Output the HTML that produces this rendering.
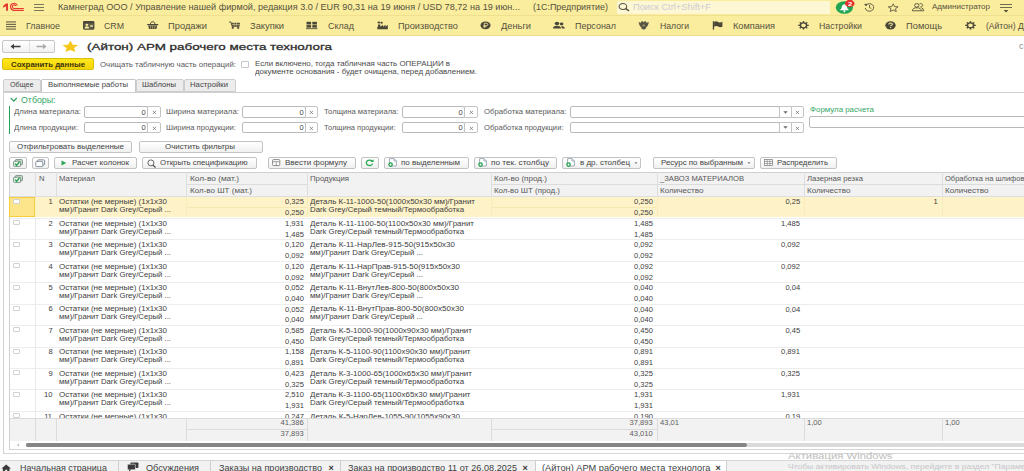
<!DOCTYPE html>
<html lang="ru"><head><meta charset="utf-8"><title>1C</title>
<style>
html,body{margin:0;padding:0}
body{width:1024px;height:471px;overflow:hidden;position:relative;background:#fff;font-family:"Liberation Sans", sans-serif;}
#r{position:absolute;left:0;top:0;width:1024px;height:471px;overflow:hidden}
#r div,#r svg,#r span{position:absolute;box-sizing:border-box}
#r span{white-space:pre;line-height:1}
</style></head><body><div id="r">
<div style="left:0px;top:0px;width:1024px;height:35.5px;background:#fbed9e;"></div>
<div style="left:0px;top:15px;width:1024px;height:1px;background:#efdf8f;"></div>
<div style="left:0px;top:35px;width:1024px;height:1px;background:#eadb92;"></div>
<svg style="left:2px;top:2px" width="24" height="11" viewBox="0 0 24 11"><path d="M1.2 3.8 L4 1.6 H6 V8.8 H4.1 V4.2 L1.2 5.7 Z" fill="#e4382e"/><g fill="none" stroke="#e4382e"><path d="M15.3 3.4 A3.5 3.5 0 1 0 12.2 8.3 H21.8" stroke-width="1.15"/><path d="M13.8 3.9 A1.8 1.8 0 1 0 12.2 6.5 H21.8" stroke-width="1.1"/></g></svg>
<div style="left:34px;top:4.0px;width:10.2px;height:1.1px;background:#7a765a;"></div>
<div style="left:34px;top:6.85px;width:10.2px;height:1.1px;background:#7a765a;"></div>
<div style="left:34px;top:9.7px;width:10.2px;height:1.1px;background:#7a765a;"></div>
<div style="left:617px;top:1px;width:213px;height:12.8px;background:#fdf7d3;border-radius:1px;"></div>
<svg style="left:618px;top:2px" width="13" height="11" viewBox="0 0 13 11"><ellipse cx="4.9" cy="4.5" rx="3.8" ry="3" fill="none" stroke="#55523e" stroke-width="1.05"/><path d="M7.8 6.7 L11 8.9" stroke="#55523e" stroke-width="1.5"/></svg>
<svg style="left:835px;top:0px" width="21" height="15" viewBox="0 0 21 15"><ellipse cx="9.4" cy="7.5" rx="8.6" ry="6.3" fill="#22a653"/><path d="M4.6 10.2 Q6.6 9 7 6.6 Q7.4 4.2 9.4 4.2 Q11.4 4.2 11.8 6.6 Q12.2 9 14.2 10.2 Z" fill="#fff"/><circle cx="9.4" cy="11.3" r="1" fill="#fff"/><ellipse cx="14.8" cy="3.5" rx="4.7" ry="3.6" fill="#e6322e"/></svg>
<svg style="left:863px;top:2.2px" width="13" height="10.6" viewBox="0 0 14 13" preserveAspectRatio="none"><path d="M3.1 4.2 A4.6 4.6 0 1 1 2.4 7.4" fill="none" stroke="#55523e" stroke-width="1.05"/><path d="M1 2.6 L3.4 5.2 L5 2.2 Z" fill="#55523e"/><path d="M7 3.8 V6.8 L9 8" fill="none" stroke="#55523e" stroke-width="1"/></svg>
<svg style="left:886.5px;top:2.6px" width="12.4" height="9.6" viewBox="0 0 14 13" preserveAspectRatio="none"><path d="M7 1.2 L8.6 4.9 L12.5 5.2 L9.5 7.8 L10.5 11.6 L7 9.5 L3.5 11.6 L4.5 7.8 L1.5 5.2 L5.4 4.9 Z" fill="none" stroke="#55523e" stroke-width="1.05" stroke-linejoin="round"/></svg>
<svg style="left:910.5px;top:2.3px" width="14" height="10.4" viewBox="0 0 15 13" preserveAspectRatio="none"><g fill="none" stroke="#55523e" stroke-width="1.05"><circle cx="6.2" cy="4.2" r="2.3"/><path d="M1.5 11 Q1.5 7.2 6.2 7.2 Q10.9 7.2 10.9 11 Z"/><path d="M9.2 2.2 A2.2 2.2 0 1 1 10 6.3 M11.2 7.5 Q13.6 8 13.6 11 H11.2"/></g></svg>
<div style="left:1000px;top:4px;width:11.5px;height:1px;background:#6e6a50;"></div>
<div style="left:1000px;top:7px;width:11.5px;height:1px;background:#6e6a50;"></div>
<svg style="left:1003px;top:9.5px" width="6" height="3" viewBox="0 0 6 3"><path d="M0.6 0 H5.4 L3 2.6 Z" fill="#55523e"/></svg>
<svg style="left:5px;top:21.2px" width="12" height="8.7" viewBox="0 0 12 11" preserveAspectRatio="none"><rect x="1" y="0.60" width="10" height="1.2" fill="#4b483a"/><rect x="1" y="3.60" width="10" height="1.2" fill="#4b483a"/><rect x="1" y="6.60" width="10" height="1.2" fill="#4b483a"/><rect x="1" y="9.60" width="10" height="1.2" fill="#4b483a"/></svg>
<svg style="left:83px;top:21.2px" width="12" height="8.7" viewBox="0 0 12 11" preserveAspectRatio="none"><rect x="0" y="0" width="11.4" height="11" rx="1.4" fill="#4b483a"/><rect x="1" y="3" width="9.4" height="6.8" fill="#615e4b"/><circle cx="3.9" cy="4.9" r="1.4" fill="#fbed9e"/><path d="M1.6 9.4 Q1.6 6.8 3.9 6.8 Q6.2 6.8 6.2 9.4 Z" fill="#fbed9e"/><rect x="7.2" y="5" width="2.6" height="2.6" fill="#cfc68c"/></svg>
<svg style="left:147px;top:21.2px" width="12" height="8.7" viewBox="0 0 12 11" preserveAspectRatio="none"><rect x="0.2" y="3.8" width="11" height="1.5" fill="#4b483a"/><path d="M1.2 5.6 H10.2 L9.4 10.2 H2 Z" fill="#4b483a"/><path d="M3.2 3.8 L4.6 1 H6.8 L8.2 3.8" fill="none" stroke="#4b483a" stroke-width="1"/><path d="M3.6 6.2 V9.8 M5.7 6.2 V9.8 M7.8 6.2 V9.8" stroke="#fbed9e" stroke-width="0.6"/></svg>
<svg style="left:229px;top:21.2px" width="12" height="8.7" viewBox="0 0 12 11" preserveAspectRatio="none"><path d="M0 1.3 H2 L3 6.8 H10.5 M2.4 3 H11" fill="none" stroke="#4b483a" stroke-width="1"/><rect x="3" y="2.4" width="7.6" height="3.8" fill="#4b483a"/><path d="M5.2 2.4 V6.2 M7.6 2.4 V6.2 M3 4.3 H10.6" stroke="#fbed9e" stroke-width="0.6"/><rect x="2.8" y="7.6" width="1.9" height="2.2" fill="#4b483a"/><rect x="8.2" y="7.6" width="1.9" height="2.2" fill="#4b483a"/></svg>
<svg style="left:306px;top:21.2px" width="12" height="8.7" viewBox="0 0 12 11" preserveAspectRatio="none"><rect x="0.5" y="1" width="4.6" height="3.4" fill="#4b483a"/><rect x="6.3" y="1" width="4.6" height="3.4" fill="#4b483a"/><rect x="0.5" y="5.2" width="4.6" height="3.2" fill="#4b483a"/><rect x="6.3" y="5.2" width="4.6" height="3.2" fill="#4b483a"/><rect x="0" y="9.2" width="11.5" height="1.1" fill="#4b483a"/></svg>
<svg style="left:377px;top:21.2px" width="12" height="8.7" viewBox="0 0 12 11" preserveAspectRatio="none"><path d="M0.3 10.6 V7.4 H1 V4.4 H3.3 V7.2 L6 4.6 V7.2 L8.6 4.6 V7.2 L10.8 4.8 V10.6 Z" fill="#4b483a"/><circle cx="1.9" cy="1.9" r="1.4" fill="#4b483a"/><circle cx="4.6" cy="2.2" r="1.2" fill="#4b483a"/></svg>
<svg style="left:480px;top:21.2px" width="12" height="8.7" viewBox="0 0 12 11" preserveAspectRatio="none"><circle cx="5.5" cy="5.5" r="5" fill="#4b483a"/><path d="M4.3 8.6 V2.8 H6.2 A1.6 1.6 0 0 1 6.2 6 H3.4 M3.4 7.3 H6.4" fill="none" stroke="#fbed9e" stroke-width="0.9"/></svg>
<svg style="left:553px;top:21.2px" width="12" height="8.7" viewBox="0 0 12 11" preserveAspectRatio="none"><circle cx="4" cy="3.2" r="2.3" fill="#4b483a"/><path d="M0 9.6 Q0 6 4 6 Q8 6 8 9.6 Z" fill="#4b483a"/><circle cx="8.6" cy="3.8" r="1.8" fill="#4b483a"/><path d="M8.4 6.4 Q11.8 6.4 11.8 9.6 H8.8 Z" fill="#4b483a"/></svg>
<svg style="left:638px;top:21.2px" width="12" height="8.7" viewBox="0 0 12 11" preserveAspectRatio="none"><g fill="#595645"><ellipse cx="5.7" cy="6" rx="2.4" ry="4.6"/><path d="M0.6 1.4 Q2.4 2.4 4 2 L4.6 8 Q1.4 8.4 0.6 1.4 Z"/><path d="M10.8 1.4 Q9 2.4 7.4 2 L6.8 8 Q10 8.4 10.8 1.4 Z"/><circle cx="4.2" cy="1.5" r="1.2"/><circle cx="7.2" cy="1.5" r="1.2"/><path d="M2.4 8.6 L5.7 10.9 L9 8.6 Z"/></g><circle cx="5.7" cy="5.6" r="1.1" fill="#fbed9e" opacity="0.55"/></svg>
<svg style="left:712px;top:21.2px" width="12" height="8.7" viewBox="0 0 12 11" preserveAspectRatio="none"><rect x="0.8" y="0.3" width="1.3" height="10.6" fill="#4b483a"/><path d="M2.1 0.9 Q4.2 -0.2 6.2 1.2 T10.4 0.9 V7.3 Q8.2 8.5 6.2 7.1 T2.1 7.3 Z" fill="#4b483a"/></svg>
<svg style="left:798px;top:21.2px" width="12" height="8.7" viewBox="0 0 12 11" preserveAspectRatio="none"><g transform="translate(5.5 5.5)"><circle r="3.1" fill="none" stroke="#4b483a" stroke-width="1.5"/><rect x="-0.8" y="-5.3" width="1.6" height="2.2" fill="#4b483a" transform="rotate(0)"/><rect x="-0.8" y="-5.3" width="1.6" height="2.2" fill="#4b483a" transform="rotate(45)"/><rect x="-0.8" y="-5.3" width="1.6" height="2.2" fill="#4b483a" transform="rotate(90)"/><rect x="-0.8" y="-5.3" width="1.6" height="2.2" fill="#4b483a" transform="rotate(135)"/><rect x="-0.8" y="-5.3" width="1.6" height="2.2" fill="#4b483a" transform="rotate(180)"/><rect x="-0.8" y="-5.3" width="1.6" height="2.2" fill="#4b483a" transform="rotate(225)"/><rect x="-0.8" y="-5.3" width="1.6" height="2.2" fill="#4b483a" transform="rotate(270)"/><rect x="-0.8" y="-5.3" width="1.6" height="2.2" fill="#4b483a" transform="rotate(315)"/></g></svg>
<svg style="left:885px;top:21.2px" width="12" height="8.7" viewBox="0 0 12 11" preserveAspectRatio="none"><circle cx="5.5" cy="5.5" r="5.2" fill="#4b483a"/><path d="M3.8 4.3 Q3.8 2.6 5.5 2.6 Q7.3 2.6 7.3 4.1 Q7.3 5 6.2 5.6 Q5.6 6 5.6 6.8" fill="none" stroke="#fbed9e" stroke-width="1.1"/><rect x="5" y="7.7" width="1.2" height="1.2" fill="#fbed9e"/></svg>
<svg style="left:965px;top:21.2px" width="12" height="8.7" viewBox="0 0 12 11" preserveAspectRatio="none"><g transform="translate(5.5 5.5)"><circle r="3.1" fill="none" stroke="#4b483a" stroke-width="1.5"/><rect x="-0.8" y="-5.3" width="1.6" height="2.2" fill="#4b483a" transform="rotate(0)"/><rect x="-0.8" y="-5.3" width="1.6" height="2.2" fill="#4b483a" transform="rotate(45)"/><rect x="-0.8" y="-5.3" width="1.6" height="2.2" fill="#4b483a" transform="rotate(90)"/><rect x="-0.8" y="-5.3" width="1.6" height="2.2" fill="#4b483a" transform="rotate(135)"/><rect x="-0.8" y="-5.3" width="1.6" height="2.2" fill="#4b483a" transform="rotate(180)"/><rect x="-0.8" y="-5.3" width="1.6" height="2.2" fill="#4b483a" transform="rotate(225)"/><rect x="-0.8" y="-5.3" width="1.6" height="2.2" fill="#4b483a" transform="rotate(270)"/><rect x="-0.8" y="-5.3" width="1.6" height="2.2" fill="#4b483a" transform="rotate(315)"/></g></svg>
<div style="left:2.3px;top:40px;width:52.4px;height:12.8px;background:linear-gradient(#ffffff,#f1f1f1);border:1px solid #c6c6c6;border-radius:2px;"></div>
<div style="left:28.7px;top:41px;width:1px;height:11px;background:#e0e0e0;"></div>
<svg style="left:10px;top:43px" width="12" height="7" viewBox="0 0 12 7"><path d="M0.5 3.5 L4 0.8 V2.8 H10.5 V4.2 H4 V6.2 Z" fill="#3e3e3e"/></svg>
<svg style="left:36px;top:43px" width="12" height="7" viewBox="0 0 12 7"><path d="M10.5 3.5 L7 0.8 V2.8 H0.5 V4.2 H7 V6.2 Z" fill="#a9a9a9"/></svg>
<svg style="left:61.25px;top:40.1px" width="18.7" height="12.5" viewBox="0 0 18 15" preserveAspectRatio="none"><path d="M9 0.8 L11.3 5.6 L16.6 6.1 L12.6 9.6 L13.8 14.5 L9 11.9 L4.2 14.5 L5.4 9.6 L1.4 6.1 L6.7 5.6 Z" fill="#f7c81c"/></svg>
<div style="left:2.2px;top:58.4px;width:92px;height:11.5px;background:linear-gradient(#ffe81e,#f4d403);border:1px solid #dcc00a;border-radius:2px;"></div>
<div style="left:241px;top:61px;width:8px;height:7.3px;background:#fff;border:1px solid #c6c6c6;border-radius:1px;"></div>
<div style="left:2.5px;top:91.5px;width:1022px;height:1px;background:#cfcfcf;"></div>
<div style="left:2.5px;top:91.5px;width:1px;height:361.5px;background:#d2d2d2;"></div>
<div style="left:2.5px;top:452.5px;width:1022px;height:1px;background:#d6d6d6;"></div>
<div style="left:2.5px;top:79.2px;width:38.5px;height:12.6px;background:#ececec;border:1px solid #cdcdcd;border-radius:2px 2px 0 0;"></div>
<div style="left:136px;top:79.2px;width:48px;height:12.6px;background:#ececec;border:1px solid #cdcdcd;border-radius:2px 2px 0 0;"></div>
<div style="left:184px;top:79.2px;width:51.5px;height:12.6px;background:#ececec;border:1px solid #cdcdcd;border-radius:2px 2px 0 0;"></div>
<div style="left:41px;top:79px;width:95px;height:13px;background:#fff;border:1px solid #c6c6c6;border-radius:2px;border-bottom:none;border-radius:2px 2px 0 0;"></div>
<svg style="left:9.8px;top:97.4px" width="8" height="6" viewBox="0 0 8 6"><path d="M0.8 1 L3.8 4.2 L6.8 1" fill="none" stroke="#2f9e5e" stroke-width="1.2"/></svg>
<div style="left:8.5px;top:106px;width:1.6px;height:27.5px;background:#23a455;"></div>
<div style="left:84px;top:106.2px;width:64px;height:11.5px;background:#fff;border:1px solid #b9b9b9;border-radius:2px;"></div>
<div style="left:147px;top:106.2px;width:13.5px;height:11.5px;background:#fff;border:1px solid #c4c4c4;border-radius:0 2px 2px 0;"></div>
<svg style="left:151.75px;top:109.9px" width="5" height="5" viewBox="0 0 5 5"><path d="M0.8 0.8 L4 4 M4 0.8 L0.8 4" stroke="#777" stroke-width="0.8"/></svg>
<div style="left:242px;top:106.2px;width:63.5px;height:11.5px;background:#fff;border:1px solid #b9b9b9;border-radius:2px;"></div>
<div style="left:304.5px;top:106.2px;width:13.5px;height:11.5px;background:#fff;border:1px solid #c4c4c4;border-radius:0 2px 2px 0;"></div>
<svg style="left:309.25px;top:109.9px" width="5" height="5" viewBox="0 0 5 5"><path d="M0.8 0.8 L4 4 M4 0.8 L0.8 4" stroke="#777" stroke-width="0.8"/></svg>
<div style="left:402px;top:106.2px;width:63px;height:11.5px;background:#fff;border:1px solid #b9b9b9;border-radius:2px;"></div>
<div style="left:464px;top:106.2px;width:13.5px;height:11.5px;background:#fff;border:1px solid #c4c4c4;border-radius:0 2px 2px 0;"></div>
<svg style="left:468.75px;top:109.9px" width="5" height="5" viewBox="0 0 5 5"><path d="M0.8 0.8 L4 4 M4 0.8 L0.8 4" stroke="#777" stroke-width="0.8"/></svg>
<div style="left:570px;top:106.2px;width:209.5px;height:11.5px;background:#fff;border:1px solid #b9b9b9;border-radius:2px;"></div>
<div style="left:778.5px;top:106.2px;width:13px;height:11.5px;background:#fff;border:1px solid #c4c4c4;"></div>
<svg style="left:782.5px;top:110.7px" width="5" height="3" viewBox="0 0 5 3"><path d="M0.4 0.2 H4.6 L2.5 2.8 Z" fill="#666"/></svg>
<div style="left:790.5px;top:106.2px;width:13.5px;height:11.5px;background:#fff;border:1px solid #c4c4c4;border-radius:0 2px 2px 0;"></div>
<svg style="left:795.25px;top:109.9px" width="5" height="5" viewBox="0 0 5 5"><path d="M0.8 0.8 L4 4 M4 0.8 L0.8 4" stroke="#777" stroke-width="0.8"/></svg>
<div style="left:84px;top:121.8px;width:64px;height:11.5px;background:#fff;border:1px solid #b9b9b9;border-radius:2px;"></div>
<div style="left:147px;top:121.8px;width:13.5px;height:11.5px;background:#fff;border:1px solid #c4c4c4;border-radius:0 2px 2px 0;"></div>
<svg style="left:151.75px;top:125.5px" width="5" height="5" viewBox="0 0 5 5"><path d="M0.8 0.8 L4 4 M4 0.8 L0.8 4" stroke="#777" stroke-width="0.8"/></svg>
<div style="left:242px;top:121.8px;width:63.5px;height:11.5px;background:#fff;border:1px solid #b9b9b9;border-radius:2px;"></div>
<div style="left:304.5px;top:121.8px;width:13.5px;height:11.5px;background:#fff;border:1px solid #c4c4c4;border-radius:0 2px 2px 0;"></div>
<svg style="left:309.25px;top:125.5px" width="5" height="5" viewBox="0 0 5 5"><path d="M0.8 0.8 L4 4 M4 0.8 L0.8 4" stroke="#777" stroke-width="0.8"/></svg>
<div style="left:402px;top:121.8px;width:63px;height:11.5px;background:#fff;border:1px solid #b9b9b9;border-radius:2px;"></div>
<div style="left:464px;top:121.8px;width:13.5px;height:11.5px;background:#fff;border:1px solid #c4c4c4;border-radius:0 2px 2px 0;"></div>
<svg style="left:468.75px;top:125.5px" width="5" height="5" viewBox="0 0 5 5"><path d="M0.8 0.8 L4 4 M4 0.8 L0.8 4" stroke="#777" stroke-width="0.8"/></svg>
<div style="left:570px;top:121.8px;width:209.5px;height:11.5px;background:#fff;border:1px solid #b9b9b9;border-radius:2px;"></div>
<div style="left:778.5px;top:121.8px;width:13px;height:11.5px;background:#fff;border:1px solid #c4c4c4;"></div>
<svg style="left:782.5px;top:126.3px" width="5" height="3" viewBox="0 0 5 3"><path d="M0.4 0.2 H4.6 L2.5 2.8 Z" fill="#666"/></svg>
<div style="left:790.5px;top:121.8px;width:13.5px;height:11.5px;background:#fff;border:1px solid #c4c4c4;border-radius:0 2px 2px 0;"></div>
<svg style="left:795.25px;top:125.5px" width="5" height="5" viewBox="0 0 5 5"><path d="M0.8 0.8 L4 4 M4 0.8 L0.8 4" stroke="#777" stroke-width="0.8"/></svg>
<div style="left:809px;top:116px;width:230px;height:11.5px;background:#fff;border:1px solid #b9b9b9;border-radius:2px;"></div>
<div style="left:9px;top:140.5px;width:123px;height:12px;background:linear-gradient(#ffffff,#f0f0f0);border:1px solid #c3c3c3;border-radius:2px;"></div>
<div style="left:139px;top:140.5px;width:123.5px;height:12px;background:linear-gradient(#ffffff,#f0f0f0);border:1px solid #c3c3c3;border-radius:2px;"></div>
<div style="left:9px;top:157px;width:17.5px;height:11.5px;background:linear-gradient(#ffffff,#f0f0f0);border:1px solid #c3c3c3;border-radius:2px;"></div>
<div style="left:31.5px;top:157px;width:17.5px;height:11.5px;background:linear-gradient(#ffffff,#f0f0f0);border:1px solid #c3c3c3;border-radius:2px;"></div>
<svg style="left:12.5px;top:158.5px" width="11" height="9" viewBox="0 0 11 9"><rect x="2.4" y="0.6" width="7" height="5.2" rx="0.8" fill="#d9e6dc" stroke="#5c7f68" stroke-width="0.8"/><rect x="0.6" y="2.2" width="7" height="5.2" rx="0.8" fill="#eef5ef" stroke="#5c7f68" stroke-width="0.8"/><path d="M2 4.6 L3.6 6.2 L6.4 3" fill="none" stroke="#1f9e4c" stroke-width="1.3"/></svg>
<svg style="left:35px;top:158.5px" width="11" height="9" viewBox="0 0 11 9"><rect x="2.6" y="0.8" width="7" height="5.2" rx="0.8" fill="#f4f4f4" stroke="#6b7a8a" stroke-width="0.8"/><rect x="0.8" y="2.4" width="7" height="5.2" rx="0.8" fill="#fff" stroke="#6b7a8a" stroke-width="0.8"/></svg>
<div style="left:54px;top:157px;width:83px;height:11.5px;background:linear-gradient(#ffffff,#f0f0f0);border:1px solid #c3c3c3;border-radius:2px;"></div>
<svg style="left:61px;top:160px" width="6" height="6" viewBox="0 0 6 6"><path d="M0.5 0.4 L5.3 2.9 L0.5 5.4 Z" fill="#2aa84f"/></svg>
<div style="left:142px;top:157px;width:114.5px;height:11.5px;background:linear-gradient(#ffffff,#f0f0f0);border:1px solid #c3c3c3;border-radius:2px;"></div>
<svg style="left:146.5px;top:158.5px" width="10" height="9" viewBox="0 0 10 9"><circle cx="3.9" cy="3.9" r="3" fill="none" stroke="#555" stroke-width="0.9"/><path d="M6 6.2 L8.6 8.4" stroke="#555" stroke-width="1.3"/></svg>
<div style="left:267.5px;top:157px;width:88.0px;height:11.5px;background:linear-gradient(#ffffff,#f0f0f0);border:1px solid #c3c3c3;border-radius:2px;"></div>
<svg style="left:272px;top:159.3px" width="9" height="8" viewBox="0 0 9 8"><rect x="0.6" y="0.6" width="7.2" height="6" rx="0.9" fill="#fdfdfd" stroke="#7d7d7d" stroke-width="0.9"/><path d="M0.6 2.7 H7.8 M4.2 2.7 V6.6" fill="none" stroke="#8a8a8a" stroke-width="0.8"/></svg>
<div style="left:361px;top:157px;width:17.5px;height:11.5px;background:linear-gradient(#ffffff,#f0f0f0);border:1px solid #c3c3c3;border-radius:2px;"></div>
<svg style="left:365px;top:159.3px" width="10" height="8" viewBox="0 0 10 8"><path d="M7.1 2.2 A3.2 2.7 0 1 0 7.6 4.6" fill="none" stroke="#2aa956" stroke-width="1.3"/><path d="M5.4 2.9 L8.7 3.1 L8.5 0.3 Z" fill="#2aa956"/></svg>
<div style="left:383.5px;top:157px;width:85.0px;height:11.5px;background:linear-gradient(#ffffff,#f0f0f0);border:1px solid #c3c3c3;border-radius:2px;"></div>
<svg style="left:388px;top:158.3px" width="10" height="9.5" viewBox="0 0 10 9.5"><path d="M1.6 0.6 H6 L8.4 3 V8 H1.6 Z" fill="#fff" stroke="#8b99a8" stroke-width="0.8"/><path d="M6 0.6 V3 H8.4" fill="none" stroke="#8b99a8" stroke-width="0.7"/><circle cx="2.6" cy="6.6" r="2.3" fill="#22a04c"/><path d="M1.4 6.6 H3.8 M2.6 5.4 V7.8" stroke="#fff" stroke-width="0.8"/></svg>
<div style="left:473.5px;top:157px;width:83.0px;height:11.5px;background:linear-gradient(#ffffff,#f0f0f0);border:1px solid #c3c3c3;border-radius:2px;"></div>
<svg style="left:477.5px;top:158.3px" width="10" height="9.5" viewBox="0 0 10 9.5"><path d="M1.6 0.6 H6 L8.4 3 V8 H1.6 Z" fill="#fff" stroke="#8b99a8" stroke-width="0.8"/><path d="M6 0.6 V3 H8.4" fill="none" stroke="#8b99a8" stroke-width="0.7"/><circle cx="2.6" cy="6.6" r="2.3" fill="#22a04c"/><path d="M1.4 6.6 H3.8 M2.6 5.4 V7.8" stroke="#fff" stroke-width="0.8"/></svg>
<div style="left:562px;top:157px;width:79px;height:11.5px;background:linear-gradient(#ffffff,#f0f0f0);border:1px solid #c3c3c3;border-radius:2px;"></div>
<svg style="left:566px;top:158.3px" width="10" height="9.5" viewBox="0 0 10 9.5"><path d="M1.6 0.6 H6 L8.4 3 V8 H1.6 Z" fill="#fff" stroke="#8b99a8" stroke-width="0.8"/><path d="M6 0.6 V3 H8.4" fill="none" stroke="#8b99a8" stroke-width="0.7"/><circle cx="2.6" cy="6.6" r="2.3" fill="#22a04c"/><path d="M1.4 6.6 H3.8 M2.6 5.4 V7.8" stroke="#fff" stroke-width="0.8"/></svg>
<svg style="left:633.5px;top:162.3px" width="4" height="3" viewBox="0 0 4 3"><path d="M0.5 0.3 H3.5 L2 2.1 Z" fill="#777"/></svg>
<div style="left:652.5px;top:157px;width:102.0px;height:11.5px;background:linear-gradient(#ffffff,#f0f0f0);border:1px solid #c3c3c3;border-radius:2px;"></div>
<svg style="left:746.5px;top:162.3px" width="4" height="3" viewBox="0 0 4 3"><path d="M0.5 0.3 H3.5 L2 2.1 Z" fill="#777"/></svg>
<div style="left:759.5px;top:157px;width:77.5px;height:11.5px;background:linear-gradient(#ffffff,#f0f0f0);border:1px solid #c3c3c3;border-radius:2px;"></div>
<svg style="left:764px;top:159.3px" width="9" height="7" viewBox="0 0 9 7"><rect x="0.5" y="0.5" width="8" height="6" fill="#fff" stroke="#777" stroke-width="0.7"/><path d="M0.5 2.5 H8.5 M0.5 4.5 H8.5 M3.2 0.5 V6.5 M5.9 0.5 V6.5" stroke="#777" stroke-width="0.6"/></svg>
<div style="left:9px;top:171.5px;width:1024px;height:25px;background:#f2f2f2;"></div>
<div style="left:9px;top:171.5px;width:1024px;height:1px;background:#cfcfcf;"></div>
<div style="left:9px;top:196px;width:1024px;height:1px;background:#dedede;"></div>
<div style="left:9px;top:171.5px;width:1px;height:277px;background:#d0d0d0;"></div>
<div style="left:35px;top:172px;width:1px;height:24.5px;background:#dedede;"></div>
<div style="left:55.7px;top:172px;width:1px;height:24.5px;background:#dedede;"></div>
<div style="left:186px;top:172px;width:1px;height:24.5px;background:#dedede;"></div>
<div style="left:307px;top:172px;width:1px;height:24.5px;background:#dedede;"></div>
<div style="left:491px;top:172px;width:1px;height:24.5px;background:#dedede;"></div>
<div style="left:656.5px;top:172px;width:1px;height:24.5px;background:#dedede;"></div>
<div style="left:803.5px;top:172px;width:1px;height:24.5px;background:#dedede;"></div>
<div style="left:941.5px;top:172px;width:1px;height:24.5px;background:#dedede;"></div>
<div style="left:186px;top:184.3px;width:121px;height:1px;background:#dcdcdc;"></div>
<div style="left:491px;top:184.3px;width:540px;height:1px;background:#dcdcdc;"></div>
<svg style="left:12.5px;top:175px" width="11" height="9" viewBox="0 0 11 9"><rect x="2.4" y="0.6" width="7" height="5.2" rx="0.8" fill="#d9e6dc" stroke="#5c7f68" stroke-width="0.8"/><rect x="0.6" y="2.2" width="7" height="5.2" rx="0.8" fill="#eef5ef" stroke="#5c7f68" stroke-width="0.8"/><path d="M2 4.6 L3.6 6.2 L6.4 3" fill="none" stroke="#1f9e4c" stroke-width="1.3"/></svg>
<div style="left:10px;top:197.0px;width:1024px;height:20.23px;background:#fdf2c8;"></div>
<div style="left:9.4px;top:196.7px;width:25.6px;height:20.23px;background:#fde58c;border:1.3px solid #f5cc3c;"></div>
<div style="left:186px;top:206.9px;width:121px;height:1px;background:#f6e8b4;"></div>
<div style="left:491px;top:206.9px;width:166px;height:1px;background:#f6e8b4;"></div>
<div style="left:186px;top:197.0px;width:1px;height:20.23px;background:#f8ecbe;"></div>
<div style="left:307px;top:197.0px;width:1px;height:20.23px;background:#f8ecbe;"></div>
<div style="left:491px;top:197.0px;width:1px;height:20.23px;background:#f8ecbe;"></div>
<div style="left:656.5px;top:197.0px;width:1px;height:20.23px;background:#f8ecbe;"></div>
<div style="left:803.5px;top:197.0px;width:1px;height:20.23px;background:#f8ecbe;"></div>
<div style="left:941.5px;top:197.0px;width:1px;height:20.23px;background:#f8ecbe;"></div>
<div style="left:13.2px;top:198.8px;width:6.5px;height:5.0px;background:#fff;border:1px solid #d2d2d2;border-radius:1px;"></div>
<div style="left:10px;top:217.93px;width:1024px;height:1px;background:#ededed;"></div>
<div style="left:35px;top:217.93px;width:1px;height:200.07px;background:#eaeaea;"></div>
<div style="left:13.2px;top:220.23000000000002px;width:6.5px;height:5.0px;background:#fff;border:1px solid #d2d2d2;border-radius:1px;"></div>
<div style="left:10px;top:239.36px;width:1024px;height:1px;background:#ededed;"></div>
<div style="left:13.2px;top:241.66000000000003px;width:6.5px;height:5.0px;background:#fff;border:1px solid #d2d2d2;border-radius:1px;"></div>
<div style="left:10px;top:260.78999999999996px;width:1024px;height:1px;background:#ededed;"></div>
<div style="left:13.2px;top:263.09px;width:6.5px;height:5.0px;background:#fff;border:1px solid #d2d2d2;border-radius:1px;"></div>
<div style="left:10px;top:282.22px;width:1024px;height:1px;background:#ededed;"></div>
<div style="left:13.2px;top:284.52000000000004px;width:6.5px;height:5.0px;background:#fff;border:1px solid #d2d2d2;border-radius:1px;"></div>
<div style="left:10px;top:303.65px;width:1024px;height:1px;background:#ededed;"></div>
<div style="left:13.2px;top:305.95px;width:6.5px;height:5.0px;background:#fff;border:1px solid #d2d2d2;border-radius:1px;"></div>
<div style="left:10px;top:325.08px;width:1024px;height:1px;background:#ededed;"></div>
<div style="left:13.2px;top:327.38px;width:6.5px;height:5.0px;background:#fff;border:1px solid #d2d2d2;border-radius:1px;"></div>
<div style="left:10px;top:346.51px;width:1024px;height:1px;background:#ededed;"></div>
<div style="left:13.2px;top:348.81px;width:6.5px;height:5.0px;background:#fff;border:1px solid #d2d2d2;border-radius:1px;"></div>
<div style="left:10px;top:367.94px;width:1024px;height:1px;background:#ededed;"></div>
<div style="left:13.2px;top:370.24px;width:6.5px;height:5.0px;background:#fff;border:1px solid #d2d2d2;border-radius:1px;"></div>
<div style="left:10px;top:389.37px;width:1024px;height:1px;background:#ededed;"></div>
<div style="left:13.2px;top:391.67px;width:6.5px;height:5.0px;background:#fff;border:1px solid #d2d2d2;border-radius:1px;"></div>
<div style="left:10px;top:410.8px;width:1024px;height:1px;background:#ededed;"></div>
<div style="left:13.2px;top:413.1px;width:6.5px;height:5.0px;background:#fff;border:1px solid #d2d2d2;border-radius:1px;"></div>
<div style="left:10px;top:417.5px;width:1024px;height:23px;z-index:3;background:#f2f2f2;"></div>
<div style="left:10px;top:417.5px;width:1024px;height:1px;z-index:3;background:#dadada;"></div>
<div style="left:35px;top:418px;width:1px;height:22.5px;z-index:3;background:#dcdcdc;"></div>
<div style="left:55.7px;top:418px;width:1px;height:22.5px;z-index:3;background:#dcdcdc;"></div>
<div style="left:186px;top:418px;width:1px;height:22.5px;z-index:3;background:#dcdcdc;"></div>
<div style="left:307px;top:418px;width:1px;height:22.5px;z-index:3;background:#dcdcdc;"></div>
<div style="left:491px;top:418px;width:1px;height:22.5px;z-index:3;background:#dcdcdc;"></div>
<div style="left:656.5px;top:418px;width:1px;height:22.5px;z-index:3;background:#dcdcdc;"></div>
<div style="left:803.5px;top:418px;width:1px;height:22.5px;z-index:3;background:#dcdcdc;"></div>
<div style="left:941.5px;top:418px;width:1px;height:22.5px;z-index:3;background:#dcdcdc;"></div>
<div style="left:186px;top:429px;width:121px;height:1px;z-index:3;background:#dcdcdc;"></div>
<div style="left:491px;top:429px;width:166px;height:1px;z-index:3;background:#dcdcdc;"></div>
<div style="left:10px;top:440.5px;width:1024px;height:8px;z-index:3;background:#fff;"></div>
<div style="left:26px;top:442.5px;width:998px;height:4.2px;z-index:3;background:#dadada;"></div>
<div style="left:26px;top:442.5px;width:721px;height:4.2px;z-index:3;background:#858585;border-radius:2.1px;"></div>
<svg style="left:16px;top:443px;z-index:3" width="4" height="4" viewBox="0 0 4 4"><path d="M3 0.4 L0.8 2 L3 3.6 Z" fill="#bdbdbd"/></svg>
<div style="left:9px;top:448.5px;width:1024px;height:1px;z-index:3;background:#d4d4d4;"></div>
<div style="left:0px;top:459.5px;width:1024px;height:12px;background:#f2f2f2;"></div>
<div style="left:0px;top:459.5px;width:1024px;height:1px;background:#d6d6d6;"></div>
<svg style="left:1.3px;top:463.6px" width="10.4" height="9" viewBox="0 0 9 9" preserveAspectRatio="none"><path d="M4.5 0.6 L8.6 4.4 H7.4 V8.4 H5.4 V5.8 H3.6 V8.4 H1.6 V4.4 H0.4 Z" fill="#3a3a3a"/></svg>
<div style="left:118px;top:459.5px;width:1px;height:12px;background:#cfcfcf;"></div>
<svg style="left:127px;top:462.3px" width="12" height="10" viewBox="0 0 12 10"><rect x="3.4" y="0.4" width="8" height="5.6" rx="0.8" fill="#3a3a3a"/><rect x="0.4" y="2.2" width="8" height="5.6" rx="0.8" fill="#3a3a3a" stroke="#f1f1f1" stroke-width="0.6"/><path d="M2 7.6 V9.6 L4.4 7.6 Z" fill="#3a3a3a"/></svg>
<div style="left:210px;top:459.5px;width:1px;height:12px;background:#cfcfcf;"></div>
<div style="left:339.5px;top:459.5px;width:1px;height:12px;background:#cfcfcf;"></div>
<div style="left:534.5px;top:459.5px;width:192.5px;height:12px;background:#fff;border:1px solid #cfcfcf;"></div>
<span style="top:3.76px;font-size:8.2px;color:#55523e;left:58.00px;transform-origin:0 50%;transform:scaleX(1.1165);">Камнеград ООО / Управление нашей фирмой, редакция 3.0 / EUR 90,31 на 19 июня / USD 78,72 на 19 июн...</span>
<span style="top:3.76px;font-size:8.2px;color:#55523e;left:533.00px;transform-origin:0 50%;transform:scaleX(1.0924);">(1С:Предприятие)</span>
<span style="top:3.76px;font-size:8.2px;color:#cfcbd3;left:633.00px;transform-origin:0 50%;transform:scaleX(1.1361);">Поиск Ctrl+Shift+F</span>
<span style="top:0.75px;font-size:6.2px;color:#fff;font-weight:bold;left:847.80px;transform-origin:0 50%;transform:scaleX(1.2163);">2</span>
<span style="top:4.44px;font-size:6.8px;color:#55523e;left:932.00px;transform-origin:0 50%;transform:scaleX(1.1825);">Администратор</span>
<span style="top:21.84px;font-size:8.7px;color:#55523e;left:26.00px;transform-origin:0 50%;transform:scaleX(1.0240);">Главное</span>
<span style="top:21.84px;font-size:8.7px;color:#55523e;left:104.00px;transform-origin:0 50%;transform:scaleX(1.0103);">CRM</span>
<span style="top:21.84px;font-size:8.7px;color:#55523e;left:168.00px;transform-origin:0 50%;transform:scaleX(1.0749);">Продажи</span>
<span style="top:21.84px;font-size:8.7px;color:#55523e;left:250.00px;transform-origin:0 50%;transform:scaleX(1.0730);">Закупки</span>
<span style="top:21.84px;font-size:8.7px;color:#55523e;left:328.00px;transform-origin:0 50%;transform:scaleX(1.0335);">Склад</span>
<span style="top:21.84px;font-size:8.7px;color:#55523e;left:398.00px;transform-origin:0 50%;transform:scaleX(1.0590);">Производство</span>
<span style="top:21.84px;font-size:8.7px;color:#55523e;left:501.00px;transform-origin:0 50%;transform:scaleX(1.0690);">Деньги</span>
<span style="top:21.84px;font-size:8.7px;color:#55523e;left:575.00px;transform-origin:0 50%;transform:scaleX(1.0278);">Персонал</span>
<span style="top:21.84px;font-size:8.7px;color:#55523e;left:660.00px;transform-origin:0 50%;transform:scaleX(0.9952);">Налоги</span>
<span style="top:21.84px;font-size:8.7px;color:#55523e;left:733.00px;transform-origin:0 50%;transform:scaleX(1.0562);">Компания</span>
<span style="top:21.84px;font-size:8.7px;color:#55523e;left:819.00px;transform-origin:0 50%;transform:scaleX(1.0092);">Настройки</span>
<span style="top:21.84px;font-size:8.7px;color:#55523e;left:906.00px;transform-origin:0 50%;transform:scaleX(1.0726);">Помощь</span>
<span style="top:21.84px;font-size:8.7px;color:#55523e;left:986.00px;transform-origin:0 50%;transform:scaleX(0.9854);">(Айтон) Доработки</span>
<span style="top:41.82px;font-size:9.9px;color:#2b2b2b;left:87.00px;transform-origin:0 50%;transform:scaleX(1.3577);-webkit-text-stroke:0.3px #2b2b2b;">(Айтон) АРМ рабочего места технолога</span>
<span style="top:42.38px;font-size:9px;color:#8a8a8a;left:1019.00px;transform-origin:0 50%;">с</span>
<span style="top:61.87px;font-size:7.12px;color:#3c3410;font-weight:bold;left:11.00px;transform-origin:0 50%;transform:scaleX(1.1024);">Сохранить данные</span>
<span style="top:61.98px;font-size:6.76px;color:#5a5a5a;left:100.00px;transform-origin:0 50%;transform:scaleX(1.1636);">Очищать табличную часть операций:</span>
<span style="top:60.92px;font-size:6.59px;color:#4a4a4a;left:255.00px;transform-origin:0 50%;transform:scaleX(1.1991);">Если включено, тогда табличная часть ОПЕРАЦИИ в</span>
<span style="top:69.02px;font-size:6.59px;color:#4a4a4a;left:255.00px;transform-origin:0 50%;transform:scaleX(1.2046);">документе основания - будет очищена, перед добавлением.</span>
<span style="top:82.13px;font-size:6.94px;color:#444;left:10.00px;transform-origin:0 50%;transform:scaleX(1.0344);">Общее</span>
<span style="top:82.13px;font-size:6.94px;color:#444;left:142.00px;transform-origin:0 50%;transform:scaleX(1.1079);">Шаблоны</span>
<span style="top:82.13px;font-size:6.94px;color:#444;left:190.00px;transform-origin:0 50%;transform:scaleX(1.1166);">Настройки</span>
<span style="top:82.13px;font-size:6.94px;color:#444;left:48.00px;transform-origin:0 50%;transform:scaleX(1.1162);">Выполняемые работы</span>
<span style="top:96.57px;font-size:8.19px;color:#33a765;left:21.00px;transform-origin:0 50%;transform:scaleX(1.0776);">Отборы:</span>
<span style="top:109.30px;font-size:6.85px;color:#5a5a5a;left:14.00px;transform-origin:0 50%;transform:scaleX(1.1490);">Длина материала:</span>
<span style="top:109.88px;font-size:6.76px;color:#444;right:878.20px;transform-origin:100% 50%;transform:scaleX(1.1236);">0</span>
<span style="top:109.30px;font-size:6.85px;color:#5a5a5a;left:166.00px;transform-origin:0 50%;transform:scaleX(1.1482);">Ширина материала:</span>
<span style="top:109.88px;font-size:6.76px;color:#444;right:720.70px;transform-origin:100% 50%;transform:scaleX(1.1236);">0</span>
<span style="top:109.30px;font-size:6.85px;color:#5a5a5a;left:324.00px;transform-origin:0 50%;transform:scaleX(1.1185);">Толщина материала:</span>
<span style="top:109.88px;font-size:6.76px;color:#444;right:561.20px;transform-origin:100% 50%;transform:scaleX(1.1236);">0</span>
<span style="top:109.30px;font-size:6.85px;color:#5a5a5a;left:484.00px;transform-origin:0 50%;transform:scaleX(1.1335);">Обработка материала:</span>
<span style="top:124.90px;font-size:6.85px;color:#5a5a5a;left:14.00px;transform-origin:0 50%;transform:scaleX(1.1231);">Длина продукции:</span>
<span style="top:125.48px;font-size:6.76px;color:#444;right:878.20px;transform-origin:100% 50%;transform:scaleX(1.1236);">0</span>
<span style="top:124.90px;font-size:6.85px;color:#5a5a5a;left:166.00px;transform-origin:0 50%;transform:scaleX(1.1242);">Ширина продукции:</span>
<span style="top:125.48px;font-size:6.76px;color:#444;right:720.70px;transform-origin:100% 50%;transform:scaleX(1.1236);">0</span>
<span style="top:124.90px;font-size:6.85px;color:#5a5a5a;left:324.00px;transform-origin:0 50%;transform:scaleX(1.0953);">Толщина продукции:</span>
<span style="top:125.48px;font-size:6.76px;color:#444;right:561.20px;transform-origin:100% 50%;transform:scaleX(1.1236);">0</span>
<span style="top:124.90px;font-size:6.85px;color:#5a5a5a;left:484.00px;transform-origin:0 50%;transform:scaleX(1.1124);">Обработка продукции:</span>
<span style="top:106.56px;font-size:6.9px;color:#33a765;left:810.00px;transform-origin:0 50%;transform:scaleX(1.1445);">Формула расчета</span>
<span style="top:144.03px;font-size:6.94px;color:#444;left:17.00px;transform-origin:0 50%;transform:scaleX(1.1509);">Отфильтровать выделенные</span>
<span style="top:144.03px;font-size:6.94px;color:#444;left:165.00px;transform-origin:0 50%;transform:scaleX(1.1502);">Очистить фильтры</span>
<span style="top:160.12px;font-size:6.59px;color:#444;left:72.00px;transform-origin:0 50%;transform:scaleX(1.2136);">Расчет колонок</span>
<span style="top:160.12px;font-size:6.59px;color:#444;left:160.00px;transform-origin:0 50%;transform:scaleX(1.1862);">Открыть спецификацию</span>
<span style="top:160.12px;font-size:6.59px;color:#444;left:285.00px;transform-origin:0 50%;transform:scaleX(1.2187);">Ввести формулу</span>
<span style="top:160.12px;font-size:6.59px;color:#444;left:401.00px;transform-origin:0 50%;transform:scaleX(1.2149);">по выделенным</span>
<span style="top:160.12px;font-size:6.59px;color:#444;left:491.00px;transform-origin:0 50%;transform:scaleX(1.2448);">по тек. столбцу</span>
<span style="top:160.12px;font-size:6.59px;color:#444;left:580.00px;transform-origin:0 50%;transform:scaleX(1.2140);">в др. столбец</span>
<span style="top:160.12px;font-size:6.59px;color:#444;left:661.00px;transform-origin:0 50%;transform:scaleX(1.2073);">Ресурс по выбранным</span>
<span style="top:160.12px;font-size:6.59px;color:#444;left:777.00px;transform-origin:0 50%;transform:scaleX(1.1835);">Распределить</span>
<span style="top:175.98px;font-size:6.76px;color:#585858;left:39.00px;transform-origin:0 50%;transform:scaleX(1.1236);">N</span>
<span style="top:175.98px;font-size:6.76px;color:#585858;left:59.00px;transform-origin:0 50%;transform:scaleX(1.1503);">Материал</span>
<span style="top:175.98px;font-size:6.76px;color:#585858;left:190.00px;transform-origin:0 50%;transform:scaleX(1.2303);">Кол-во (мат.)</span>
<span style="top:187.78px;font-size:6.76px;color:#585858;left:190.00px;transform-origin:0 50%;transform:scaleX(1.1919);">Кол-во ШТ (мат.)</span>
<span style="top:175.98px;font-size:6.76px;color:#585858;left:310.00px;transform-origin:0 50%;transform:scaleX(1.1545);">Продукция</span>
<span style="top:175.98px;font-size:6.76px;color:#585858;left:494.00px;transform-origin:0 50%;transform:scaleX(1.1990);">Кол-во (прод.)</span>
<span style="top:187.78px;font-size:6.76px;color:#585858;left:494.00px;transform-origin:0 50%;transform:scaleX(1.1707);">Кол-во ШТ (прод.)</span>
<span style="top:175.98px;font-size:6.76px;color:#585858;left:660.00px;transform-origin:0 50%;transform:scaleX(1.1316);">_ЗАВОЗ МАТЕРИАЛОВ</span>
<span style="top:187.78px;font-size:6.76px;color:#585858;left:660.00px;transform-origin:0 50%;transform:scaleX(1.2000);">Количество</span>
<span style="top:175.98px;font-size:6.76px;color:#585858;left:807.00px;transform-origin:0 50%;transform:scaleX(1.1436);">Лазерная резка</span>
<span style="top:187.78px;font-size:6.76px;color:#585858;left:807.00px;transform-origin:0 50%;transform:scaleX(1.2000);">Количество</span>
<span style="top:175.98px;font-size:6.76px;color:#585858;left:945.00px;transform-origin:0 50%;transform:scaleX(1.1151);">Обработка на шлифов</span>
<span style="top:187.78px;font-size:6.76px;color:#585858;left:945.00px;transform-origin:0 50%;transform:scaleX(1.2000);">Количество</span>
<span style="top:199.28px;font-size:6.76px;color:#404040;right:971.50px;transform-origin:100% 50%;transform:scaleX(1.1236);">1</span>
<span style="top:199.28px;font-size:6.76px;color:#404040;left:59.00px;transform-origin:0 50%;transform:scaleX(1.1846);">Остатки (не мерные) (1x1x30</span>
<span style="top:207.28px;font-size:6.76px;color:#404040;left:59.00px;transform-origin:0 50%;transform:scaleX(1.1452);">мм)/Гранит Dark Grey/Серый ...</span>
<span style="top:199.48px;font-size:6.76px;color:#404040;right:720.50px;transform-origin:100% 50%;transform:scaleX(1.1236);">0,325</span>
<span style="top:210.28px;font-size:6.76px;color:#404040;right:720.50px;transform-origin:100% 50%;transform:scaleX(1.1236);">0,250</span>
<span style="top:199.28px;font-size:6.76px;color:#404040;left:310.00px;transform-origin:0 50%;transform:scaleX(1.1778);">Деталь К-11-1000-50(1000x50x30 мм)/Гранит</span>
<span style="top:207.28px;font-size:6.76px;color:#404040;left:310.00px;transform-origin:0 50%;transform:scaleX(1.1549);">Dark Grey/Серый темный/Термообработка</span>
<span style="top:199.48px;font-size:6.76px;color:#404040;right:371.00px;transform-origin:100% 50%;transform:scaleX(1.1236);">0,250</span>
<span style="top:210.28px;font-size:6.76px;color:#404040;right:371.00px;transform-origin:100% 50%;transform:scaleX(1.1236);">0,250</span>
<span style="top:199.48px;font-size:6.76px;color:#404040;right:224.00px;transform-origin:100% 50%;transform:scaleX(1.1236);">0,25</span>
<span style="top:199.48px;font-size:6.76px;color:#404040;right:86.00px;transform-origin:100% 50%;transform:scaleX(1.1236);">1</span>
<span style="top:220.71px;font-size:6.76px;color:#404040;right:971.50px;transform-origin:100% 50%;transform:scaleX(1.1236);">2</span>
<span style="top:220.71px;font-size:6.76px;color:#404040;left:59.00px;transform-origin:0 50%;transform:scaleX(1.1846);">Остатки (не мерные) (1x1x30</span>
<span style="top:228.71px;font-size:6.76px;color:#404040;left:59.00px;transform-origin:0 50%;transform:scaleX(1.1452);">мм)/Гранит Dark Grey/Серый ...</span>
<span style="top:220.91px;font-size:6.76px;color:#404040;right:720.50px;transform-origin:100% 50%;transform:scaleX(1.1236);">1,931</span>
<span style="top:231.71px;font-size:6.76px;color:#404040;right:720.50px;transform-origin:100% 50%;transform:scaleX(1.1236);">1,485</span>
<span style="top:220.71px;font-size:6.76px;color:#404040;left:310.00px;transform-origin:0 50%;transform:scaleX(1.1791);">Деталь К-11-1100-50(1100x50x30 мм)/Гранит</span>
<span style="top:228.71px;font-size:6.76px;color:#404040;left:310.00px;transform-origin:0 50%;transform:scaleX(1.1549);">Dark Grey/Серый темный/Термообработка</span>
<span style="top:220.91px;font-size:6.76px;color:#404040;right:371.00px;transform-origin:100% 50%;transform:scaleX(1.1236);">1,485</span>
<span style="top:231.71px;font-size:6.76px;color:#404040;right:371.00px;transform-origin:100% 50%;transform:scaleX(1.1236);">1,485</span>
<span style="top:220.91px;font-size:6.76px;color:#404040;right:224.00px;transform-origin:100% 50%;transform:scaleX(1.1236);">1,485</span>
<span style="top:242.14px;font-size:6.76px;color:#404040;right:971.50px;transform-origin:100% 50%;transform:scaleX(1.1236);">3</span>
<span style="top:242.14px;font-size:6.76px;color:#404040;left:59.00px;transform-origin:0 50%;transform:scaleX(1.1846);">Остатки (не мерные) (1x1x30</span>
<span style="top:250.14px;font-size:6.76px;color:#404040;left:59.00px;transform-origin:0 50%;transform:scaleX(1.1452);">мм)/Гранит Dark Grey/Серый ...</span>
<span style="top:242.34px;font-size:6.76px;color:#404040;right:720.50px;transform-origin:100% 50%;transform:scaleX(1.1236);">0,120</span>
<span style="top:253.14px;font-size:6.76px;color:#404040;right:720.50px;transform-origin:100% 50%;transform:scaleX(1.1236);">0,092</span>
<span style="top:242.14px;font-size:6.76px;color:#404040;left:310.00px;transform-origin:0 50%;transform:scaleX(1.1852);">Деталь К-11-НарЛев-915-50(915x50x30</span>
<span style="top:250.14px;font-size:6.76px;color:#404040;left:310.00px;transform-origin:0 50%;transform:scaleX(1.1555);">мм)/Гранит Dark Grey/Серый ...</span>
<span style="top:242.34px;font-size:6.76px;color:#404040;right:371.00px;transform-origin:100% 50%;transform:scaleX(1.1236);">0,092</span>
<span style="top:253.14px;font-size:6.76px;color:#404040;right:371.00px;transform-origin:100% 50%;transform:scaleX(1.1236);">0,092</span>
<span style="top:242.34px;font-size:6.76px;color:#404040;right:224.00px;transform-origin:100% 50%;transform:scaleX(1.1236);">0,092</span>
<span style="top:263.57px;font-size:6.76px;color:#404040;right:971.50px;transform-origin:100% 50%;transform:scaleX(1.1236);">4</span>
<span style="top:263.57px;font-size:6.76px;color:#404040;left:59.00px;transform-origin:0 50%;transform:scaleX(1.1846);">Остатки (не мерные) (1x1x30</span>
<span style="top:271.57px;font-size:6.76px;color:#404040;left:59.00px;transform-origin:0 50%;transform:scaleX(1.1452);">мм)/Гранит Dark Grey/Серый ...</span>
<span style="top:263.77px;font-size:6.76px;color:#404040;right:720.50px;transform-origin:100% 50%;transform:scaleX(1.1236);">0,120</span>
<span style="top:274.57px;font-size:6.76px;color:#404040;right:720.50px;transform-origin:100% 50%;transform:scaleX(1.1236);">0,092</span>
<span style="top:263.57px;font-size:6.76px;color:#404040;left:310.00px;transform-origin:0 50%;transform:scaleX(1.1856);">Деталь К-11-НарПрав-915-50(915x50x30</span>
<span style="top:271.57px;font-size:6.76px;color:#404040;left:310.00px;transform-origin:0 50%;transform:scaleX(1.1555);">мм)/Гранит Dark Grey/Серый ...</span>
<span style="top:263.77px;font-size:6.76px;color:#404040;right:371.00px;transform-origin:100% 50%;transform:scaleX(1.1236);">0,092</span>
<span style="top:274.57px;font-size:6.76px;color:#404040;right:371.00px;transform-origin:100% 50%;transform:scaleX(1.1236);">0,092</span>
<span style="top:263.77px;font-size:6.76px;color:#404040;right:224.00px;transform-origin:100% 50%;transform:scaleX(1.1236);">0,092</span>
<span style="top:285.00px;font-size:6.76px;color:#404040;right:971.50px;transform-origin:100% 50%;transform:scaleX(1.1236);">5</span>
<span style="top:285.00px;font-size:6.76px;color:#404040;left:59.00px;transform-origin:0 50%;transform:scaleX(1.1846);">Остатки (не мерные) (1x1x30</span>
<span style="top:293.00px;font-size:6.76px;color:#404040;left:59.00px;transform-origin:0 50%;transform:scaleX(1.1452);">мм)/Гранит Dark Grey/Серый ...</span>
<span style="top:285.20px;font-size:6.76px;color:#404040;right:720.50px;transform-origin:100% 50%;transform:scaleX(1.1236);">0,052</span>
<span style="top:296.00px;font-size:6.76px;color:#404040;right:720.50px;transform-origin:100% 50%;transform:scaleX(1.1236);">0,040</span>
<span style="top:285.00px;font-size:6.76px;color:#404040;left:310.00px;transform-origin:0 50%;transform:scaleX(1.1953);">Деталь К-11-ВнутЛев-800-50(800x50x30</span>
<span style="top:293.00px;font-size:6.76px;color:#404040;left:310.00px;transform-origin:0 50%;transform:scaleX(1.1555);">мм)/Гранит Dark Grey/Серый ...</span>
<span style="top:285.20px;font-size:6.76px;color:#404040;right:371.00px;transform-origin:100% 50%;transform:scaleX(1.1236);">0,040</span>
<span style="top:296.00px;font-size:6.76px;color:#404040;right:371.00px;transform-origin:100% 50%;transform:scaleX(1.1236);">0,040</span>
<span style="top:285.20px;font-size:6.76px;color:#404040;right:224.00px;transform-origin:100% 50%;transform:scaleX(1.1236);">0,04</span>
<span style="top:306.43px;font-size:6.76px;color:#404040;right:971.50px;transform-origin:100% 50%;transform:scaleX(1.1236);">6</span>
<span style="top:306.43px;font-size:6.76px;color:#404040;left:59.00px;transform-origin:0 50%;transform:scaleX(1.1846);">Остатки (не мерные) (1x1x30</span>
<span style="top:314.43px;font-size:6.76px;color:#404040;left:59.00px;transform-origin:0 50%;transform:scaleX(1.1452);">мм)/Гранит Dark Grey/Серый ...</span>
<span style="top:306.63px;font-size:6.76px;color:#404040;right:720.50px;transform-origin:100% 50%;transform:scaleX(1.1236);">0,052</span>
<span style="top:317.43px;font-size:6.76px;color:#404040;right:720.50px;transform-origin:100% 50%;transform:scaleX(1.1236);">0,040</span>
<span style="top:306.43px;font-size:6.76px;color:#404040;left:310.00px;transform-origin:0 50%;transform:scaleX(1.1954);">Деталь К-11-ВнутПрав-800-50(800x50x30</span>
<span style="top:314.43px;font-size:6.76px;color:#404040;left:310.00px;transform-origin:0 50%;transform:scaleX(1.1555);">мм)/Гранит Dark Grey/Серый ...</span>
<span style="top:306.63px;font-size:6.76px;color:#404040;right:371.00px;transform-origin:100% 50%;transform:scaleX(1.1236);">0,040</span>
<span style="top:317.43px;font-size:6.76px;color:#404040;right:371.00px;transform-origin:100% 50%;transform:scaleX(1.1236);">0,040</span>
<span style="top:306.63px;font-size:6.76px;color:#404040;right:224.00px;transform-origin:100% 50%;transform:scaleX(1.1236);">0,04</span>
<span style="top:327.86px;font-size:6.76px;color:#404040;right:971.50px;transform-origin:100% 50%;transform:scaleX(1.1236);">7</span>
<span style="top:327.86px;font-size:6.76px;color:#404040;left:59.00px;transform-origin:0 50%;transform:scaleX(1.1846);">Остатки (не мерные) (1x1x30</span>
<span style="top:335.86px;font-size:6.76px;color:#404040;left:59.00px;transform-origin:0 50%;transform:scaleX(1.1452);">мм)/Гранит Dark Grey/Серый ...</span>
<span style="top:328.06px;font-size:6.76px;color:#404040;right:720.50px;transform-origin:100% 50%;transform:scaleX(1.1236);">0,585</span>
<span style="top:338.86px;font-size:6.76px;color:#404040;right:720.50px;transform-origin:100% 50%;transform:scaleX(1.1236);">0,450</span>
<span style="top:327.86px;font-size:6.76px;color:#404040;left:310.00px;transform-origin:0 50%;transform:scaleX(1.1838);">Деталь К-5-1000-90(1000x90x30 мм)/Гранит</span>
<span style="top:335.86px;font-size:6.76px;color:#404040;left:310.00px;transform-origin:0 50%;transform:scaleX(1.1549);">Dark Grey/Серый темный/Термообработка</span>
<span style="top:328.06px;font-size:6.76px;color:#404040;right:371.00px;transform-origin:100% 50%;transform:scaleX(1.1236);">0,450</span>
<span style="top:338.86px;font-size:6.76px;color:#404040;right:371.00px;transform-origin:100% 50%;transform:scaleX(1.1236);">0,450</span>
<span style="top:328.06px;font-size:6.76px;color:#404040;right:224.00px;transform-origin:100% 50%;transform:scaleX(1.1236);">0,45</span>
<span style="top:349.29px;font-size:6.76px;color:#404040;right:971.50px;transform-origin:100% 50%;transform:scaleX(1.1236);">8</span>
<span style="top:349.29px;font-size:6.76px;color:#404040;left:59.00px;transform-origin:0 50%;transform:scaleX(1.1846);">Остатки (не мерные) (1x1x30</span>
<span style="top:357.29px;font-size:6.76px;color:#404040;left:59.00px;transform-origin:0 50%;transform:scaleX(1.1452);">мм)/Гранит Dark Grey/Серый ...</span>
<span style="top:349.49px;font-size:6.76px;color:#404040;right:720.50px;transform-origin:100% 50%;transform:scaleX(1.1236);">1,158</span>
<span style="top:360.29px;font-size:6.76px;color:#404040;right:720.50px;transform-origin:100% 50%;transform:scaleX(1.1236);">0,891</span>
<span style="top:349.29px;font-size:6.76px;color:#404040;left:310.00px;transform-origin:0 50%;transform:scaleX(1.1815);">Деталь К-5-1100-90(1100x90x30 мм)/Гранит</span>
<span style="top:357.29px;font-size:6.76px;color:#404040;left:310.00px;transform-origin:0 50%;transform:scaleX(1.1549);">Dark Grey/Серый темный/Термообработка</span>
<span style="top:349.49px;font-size:6.76px;color:#404040;right:371.00px;transform-origin:100% 50%;transform:scaleX(1.1236);">0,891</span>
<span style="top:360.29px;font-size:6.76px;color:#404040;right:371.00px;transform-origin:100% 50%;transform:scaleX(1.1236);">0,891</span>
<span style="top:349.49px;font-size:6.76px;color:#404040;right:224.00px;transform-origin:100% 50%;transform:scaleX(1.1236);">0,891</span>
<span style="top:370.72px;font-size:6.76px;color:#404040;right:971.50px;transform-origin:100% 50%;transform:scaleX(1.1236);">9</span>
<span style="top:370.72px;font-size:6.76px;color:#404040;left:59.00px;transform-origin:0 50%;transform:scaleX(1.1846);">Остатки (не мерные) (1x1x30</span>
<span style="top:378.72px;font-size:6.76px;color:#404040;left:59.00px;transform-origin:0 50%;transform:scaleX(1.1452);">мм)/Гранит Dark Grey/Серый ...</span>
<span style="top:370.92px;font-size:6.76px;color:#404040;right:720.50px;transform-origin:100% 50%;transform:scaleX(1.1236);">0,423</span>
<span style="top:381.72px;font-size:6.76px;color:#404040;right:720.50px;transform-origin:100% 50%;transform:scaleX(1.1236);">0,325</span>
<span style="top:370.72px;font-size:6.76px;color:#404040;left:310.00px;transform-origin:0 50%;transform:scaleX(1.1838);">Деталь К-3-1000-65(1000x65x30 мм)/Гранит</span>
<span style="top:378.72px;font-size:6.76px;color:#404040;left:310.00px;transform-origin:0 50%;transform:scaleX(1.1549);">Dark Grey/Серый темный/Термообработка</span>
<span style="top:370.92px;font-size:6.76px;color:#404040;right:371.00px;transform-origin:100% 50%;transform:scaleX(1.1236);">0,325</span>
<span style="top:381.72px;font-size:6.76px;color:#404040;right:371.00px;transform-origin:100% 50%;transform:scaleX(1.1236);">0,325</span>
<span style="top:370.92px;font-size:6.76px;color:#404040;right:224.00px;transform-origin:100% 50%;transform:scaleX(1.1236);">0,325</span>
<span style="top:392.15px;font-size:6.76px;color:#404040;right:971.50px;transform-origin:100% 50%;transform:scaleX(1.1236);">10</span>
<span style="top:392.15px;font-size:6.76px;color:#404040;left:59.00px;transform-origin:0 50%;transform:scaleX(1.1846);">Остатки (не мерные) (1x1x30</span>
<span style="top:400.15px;font-size:6.76px;color:#404040;left:59.00px;transform-origin:0 50%;transform:scaleX(1.1452);">мм)/Гранит Dark Grey/Серый ...</span>
<span style="top:392.35px;font-size:6.76px;color:#404040;right:720.50px;transform-origin:100% 50%;transform:scaleX(1.1236);">2,510</span>
<span style="top:403.15px;font-size:6.76px;color:#404040;right:720.50px;transform-origin:100% 50%;transform:scaleX(1.1236);">1,931</span>
<span style="top:392.15px;font-size:6.76px;color:#404040;left:310.00px;transform-origin:0 50%;transform:scaleX(1.1815);">Деталь К-3-1100-65(1100x65x30 мм)/Гранит</span>
<span style="top:400.15px;font-size:6.76px;color:#404040;left:310.00px;transform-origin:0 50%;transform:scaleX(1.1549);">Dark Grey/Серый темный/Термообработка</span>
<span style="top:392.35px;font-size:6.76px;color:#404040;right:371.00px;transform-origin:100% 50%;transform:scaleX(1.1236);">1,931</span>
<span style="top:403.15px;font-size:6.76px;color:#404040;right:371.00px;transform-origin:100% 50%;transform:scaleX(1.1236);">1,931</span>
<span style="top:392.35px;font-size:6.76px;color:#404040;right:224.00px;transform-origin:100% 50%;transform:scaleX(1.1236);">1,931</span>
<span style="top:413.58px;font-size:6.76px;color:#404040;right:971.50px;transform-origin:100% 50%;transform:scaleX(1.1236);">11</span>
<span style="top:413.58px;font-size:6.76px;color:#404040;left:59.00px;transform-origin:0 50%;transform:scaleX(1.1846);">Остатки (не мерные) (1x1x30</span>
<span style="top:421.58px;font-size:6.76px;color:#404040;left:59.00px;transform-origin:0 50%;transform:scaleX(1.1452);">мм)/Гранит Dark Grey/Серый ...</span>
<span style="top:413.78px;font-size:6.76px;color:#404040;right:720.50px;transform-origin:100% 50%;transform:scaleX(1.1236);">0,247</span>
<span style="top:424.58px;font-size:6.76px;color:#404040;right:720.50px;transform-origin:100% 50%;transform:scaleX(1.1236);">0,190</span>
<span style="top:413.58px;font-size:6.76px;color:#404040;left:310.00px;transform-origin:0 50%;transform:scaleX(1.1849);">Деталь К-5-НарЛев-1055-90(1055x90x30</span>
<span style="top:413.78px;font-size:6.76px;color:#404040;right:371.00px;transform-origin:100% 50%;transform:scaleX(1.1236);">0,190</span>
<span style="top:413.78px;font-size:6.76px;color:#404040;right:224.00px;transform-origin:100% 50%;transform:scaleX(1.1236);">0,19</span>
<span style="top:420.48px;font-size:6.76px;color:#5c5c5c;right:720.50px;transform-origin:100% 50%;transform:scaleX(1.1236);z-index:4;">41,386</span>
<span style="top:431.28px;font-size:6.76px;color:#5c5c5c;right:720.50px;transform-origin:100% 50%;transform:scaleX(1.1236);z-index:4;">37,893</span>
<span style="top:420.48px;font-size:6.76px;color:#5c5c5c;right:371.00px;transform-origin:100% 50%;transform:scaleX(1.1236);z-index:4;">37,893</span>
<span style="top:431.28px;font-size:6.76px;color:#5c5c5c;right:371.00px;transform-origin:100% 50%;transform:scaleX(1.1236);z-index:4;">43,010</span>
<span style="top:420.48px;font-size:6.76px;color:#5c5c5c;left:660.00px;transform-origin:0 50%;transform:scaleX(1.1236);z-index:4;">43,01</span>
<span style="top:420.48px;font-size:6.76px;color:#5c5c5c;left:807.00px;transform-origin:0 50%;transform:scaleX(1.1236);z-index:4;">1,00</span>
<span style="top:420.48px;font-size:6.76px;color:#5c5c5c;left:945.00px;transform-origin:0 50%;transform:scaleX(1.1236);z-index:4;">1,00</span>
<span style="top:464.02px;font-size:8.6px;color:#3f3f3f;left:20.00px;transform-origin:0 50%;transform:scaleX(1.0462);">Начальная страница</span>
<span style="top:464.02px;font-size:8.6px;color:#3f3f3f;left:146.00px;transform-origin:0 50%;transform:scaleX(1.0610);">Обсуждения</span>
<span style="top:464.02px;font-size:8.6px;color:#3f3f3f;left:219.00px;transform-origin:0 50%;transform:scaleX(1.0561);">Заказы на производство</span>
<span style="top:463.98px;font-size:9px;color:#333;font-weight:bold;left:328.50px;transform-origin:0 50%;">×</span>
<span style="top:464.02px;font-size:8.6px;color:#3f3f3f;left:348.00px;transform-origin:0 50%;transform:scaleX(1.0630);">Заказ на производство 11 от 26.08.2025</span>
<span style="top:463.98px;font-size:9px;color:#333;font-weight:bold;left:522.50px;transform-origin:0 50%;">×</span>
<span style="top:464.02px;font-size:8.6px;color:#3f3f3f;left:542.00px;transform-origin:0 50%;transform:scaleX(1.0729);">(Айтон) АРМ рабочего места технолога</span>
<span style="top:463.98px;font-size:9px;color:#333;font-weight:bold;left:715.50px;transform-origin:0 50%;">×</span>
<span style="top:452.21px;font-size:9.2px;color:#bdbdbd;left:787.50px;transform-origin:0 50%;transform:scaleX(1.2342);z-index:5;">Активация Windows</span>
<span style="top:462.67px;font-size:7.0px;color:#c6c6c6;left:787.50px;transform-origin:0 50%;transform:scaleX(1.2170);z-index:5;">Чтобы активировать Windows, перейдите в раздел &quot;Параме</span>
</div></body></html>
